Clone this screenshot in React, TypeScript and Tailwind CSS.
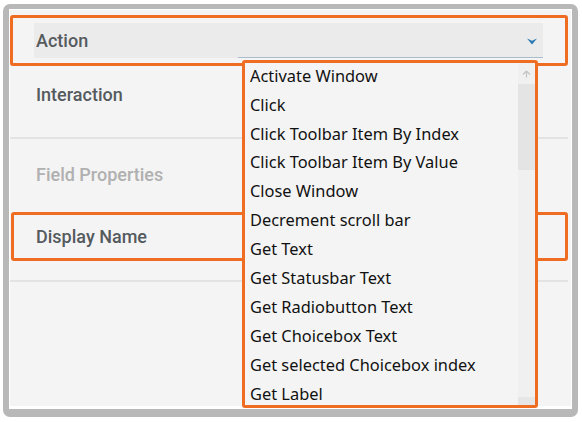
import React from 'react';

const actions: string[] = [
    'Activate Window',
    'Click',
    'Click Toolbar Item By Index',
    'Click Toolbar Item By Value',
    'Close Window',
    'Decrement scroll bar',
    'Get Text',
    'Get Statusbar Text',
    'Get Radiobutton Text',
    'Get Choicebox Text',
    'Get selected Choicebox index',
    'Get Label',
];

function ActionList() {
    return (
        <div className="absolute left-[232px] top-[50px] w-[296px] h-[348px] border-[3px] border-[#ef6c23] rounded-[3px] bg-[#f4f4f4] overflow-hidden flex">
            <div className="flex-1 overflow-hidden -mt-[1.5px]">
                {actions.map((item) => (
                    <div
                        key={item}
                        className="h-[28.95px] flex items-center pl-[5px] text-[16.4px] text-[#111111] whitespace-nowrap font-['Noto_Sans',sans-serif]"
                    >
                        {item}
                    </div>
                ))}
            </div>
            <div className="w-[17px] bg-[#f0f0f0] flex flex-col">
                <div className="h-[21px] flex items-center justify-center">
                    <svg width="9" height="8" viewBox="0 0 9 8">
                        <path d="M4.5 1 L1 4.5 M4.5 1 L8 4.5 M4.5 1 V7.5" stroke="#c4c4c4" strokeWidth="1.2" fill="none" />
                    </svg>
                </div>
                <div className="h-[86px] bg-[#e4e4e4]" />
                <div className="flex-1" />
                <div className="h-[8px] bg-[#e6e6e6]" />
            </div>
        </div>
    );
}

export default function App() {
    return (
        <div className="w-[582px] h-[422px] bg-white pl-[3px] pt-[4px] font-['Roboto',sans-serif]">
            <div className="w-[575px] h-[413px] border-x-[6px] border-t-[5px] border-b-[8px] border-[#b8b8b8] rounded-[7px] bg-white">
                <div className="relative h-full border border-white border-b-[3px] bg-[#f4f4f4] pt-[5px]">
                    <div className="w-[558px] h-[51px] border-[3px] border-[#ef6c23] rounded-[3px] pl-[21px] pt-[5px]">
                        <div className="w-[509px] h-[35px] bg-[#ebebeb] flex items-center justify-between pl-[2px] pr-[6px]">
                            <span className="text-[18px] font-medium text-[#555a5e]">Action</span>
                            <svg width="10" height="7" viewBox="0 0 10 7" className="mt-[2px]">
                                <path d="M0 0.5 L5 2.8 L10 0.5 L5 6.5 Z" fill="#2a7ab3" />
                            </svg>
                        </div>
                    </div>
                    <div className="h-[71px] pt-[17px] pl-[26px]">
                        <span className="text-[18px] leading-[24px] font-medium text-[#555a5e]">Interaction</span>
                    </div>
                    <div className="w-[558px] h-[2px] bg-[#e3e3e3]" />
                    <div className="h-[73px] pt-[24px] pl-[26px]">
                        <span className="text-[18px] leading-[24px] font-medium text-[#b0b0b0]">Field Properties</span>
                    </div>
                    <div className="ml-[1px] w-[557px] h-[49px] border-[3px] border-[#ef6c23] rounded-[3px] pl-[22px] flex items-center">
                        <span className="text-[18px] font-medium text-[#555a5e]">Display Name</span>
                    </div>
                    <div className="h-[19px]" />
                    <div className="w-[558px] h-[2px] bg-[#e3e3e3]" />
                    <div className="absolute left-[228px] top-[47px] w-[305px] h-[1px] bg-[#a9bccb]" />
                    <ActionList />
                </div>
            </div>
        </div>
    );
}
